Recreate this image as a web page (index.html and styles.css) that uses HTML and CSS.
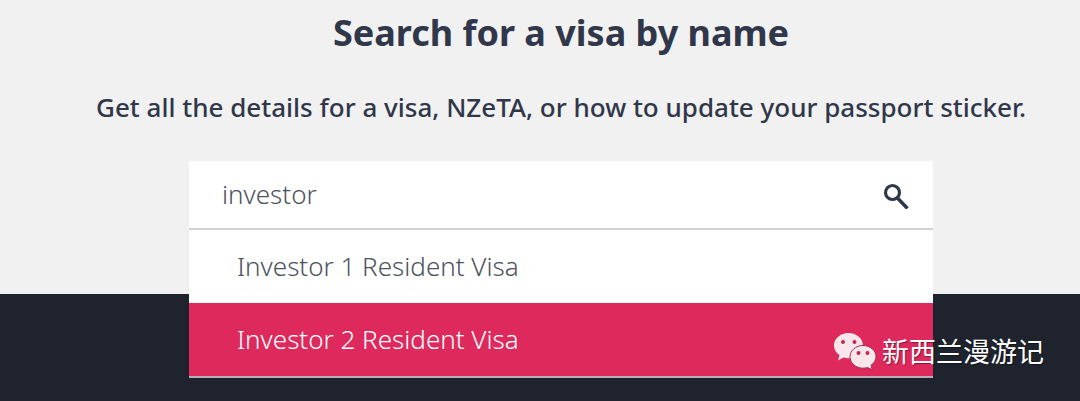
FILE: index.html
```html
<!DOCTYPE html>
<html lang="en">
<head>
    <title>Search for a visa by name</title>
    <meta charset="utf-8">
    <meta name="viewport" content="width=device-width, initial-scale=1">
    <link rel="stylesheet" href="styles.css">
</head>
<body>
    <main class="visa-search">
        <h1>Search for a visa by name</h1>
        <p class="intro"><label for="visa-name">Get all the details for a visa, NZeTA, or how to update your passport sticker.</label></p>

        <form class="search" role="search">
            <div class="search-field">
                <input id="visa-name" type="text" value="investor" autocomplete="off">
                <button type="submit" aria-label="Search">
                    <svg viewBox="0 0 28 28" width="28" height="28">
                        <circle cx="11.5" cy="11.5" r="7" fill="none" stroke="#30374a" stroke-width="3.2"/>
                        <path d="M16 16.5L26.500 27.500" fill="none" stroke="#30374a" stroke-width="3.5"/>
                    </svg>
                </button>
            </div>
            <ul class="results">
                <li><a href="#investor-1">Investor 1 Resident Visa</a></li>
                <li><a class="active" href="#investor-2">Investor 2 Resident Visa</a></li>
            </ul>
        </form>
    </main>

    <footer class="footer">
        <div class="account">
            <svg viewBox="0 0 44 38" width="44" height="38">
                <path d="M15.5 1C7.5 1 1 6.5 1 13.5c0 4 2 7.300 5.500 9.600L5 28.500l5.500-3c1.600.5 3.300.7 5 .7 8 0 14.500-5.500 14.500-12.500S23.500 1 15.500 1z" fill="#fbe6ec"/>
                <circle cx="10" cy="10" r="2" fill="#c32853"/>
                <circle cx="21.5" cy="10" r="2" fill="#c32853"/>
                <path d="M30 13.500c-7.200 0-13 5-13 11.300s5.800 11.400 13 11.400c1.600 0 3.100-.3 4.500-.7l4.800 2.300-1.300-4.500c3-2.100 5-5.100 5-8.500 0-6.300-5.800-11.300-13-11.300z" fill="#fbe6ec" stroke="#a32c4f" stroke-width="1"/>
                <circle cx="25.5" cy="21" r="2" fill="#c32853"/>
                <circle cx="34.5" cy="21" r="2" fill="#c32853"/>
            </svg>
            <span lang="zh">新西兰漫游记</span>
        </div>
    </footer>
</body>
</html>
```
FILE: styles.css
```css
* { box-sizing: border-box; }
body {
    display: flex;
    flex-direction: column;
    min-height: 100vh;
    margin: 0;
    background: #1f232d;
    color: #30374a;
    font-family: "Noto Sans", "Open Sans", sans-serif;
}

.visa-search {
    padding: 8px 14px 64px 56px;
    background: #f1f1f1;
    text-align: center;
}
h1 { margin: 0; font-size: 36px; line-height: 50px; font-weight: 700; }
.intro { margin: 32px 0 36px; font-size: 26px; line-height: 35px; font-weight: 500; }

.search { position: relative; z-index: 1; max-width: 744px; margin: 0 auto; text-align: left; }
.search-field {
    display: flex;
    align-items: center;
    height: 69px;
    padding: 0 24px 0 33px;
    background: #fff;
    border-bottom: 2px solid #d0d0d0;
}
.search-field input {
    flex: 1;
    min-width: 0;
    padding: 0;
    border: 0;
    outline: 0;
    background: none;
    color: #4c525e;
    font: 300 26px/35px "Noto Sans", "Open Sans", sans-serif;
}
.search-field button { display: flex; padding: 0; border: 0; background: none; cursor: pointer; }

/* suggestions hang over the footer */
.results {
    position: absolute;
    top: 100%;
    left: 0;
    right: 0;
    margin: 0;
    padding: 0;
    list-style: none;
    background: #fff;
    border-bottom: 2px solid #b8b0b6;
}
.results a {
    display: block;
    padding: 19px 48px;
    color: #4c525e;
    font-size: 26px;
    line-height: 35px;
    font-weight: 300;
    text-decoration: none;
}
.results .active { background: #de295d; color: #fff; }

.footer { flex: 1; min-height: 107px; }
.account {
    position: relative;
    z-index: 2;
    display: flex;
    align-items: center;
    justify-content: flex-end;
    gap: 5px;
    padding: 37px 36px 0 0;
    color: #fff;
    font: 27px/40px "Noto Sans CJK SC", sans-serif;
    text-shadow: 1px 1px 1px #0006;
}
```
